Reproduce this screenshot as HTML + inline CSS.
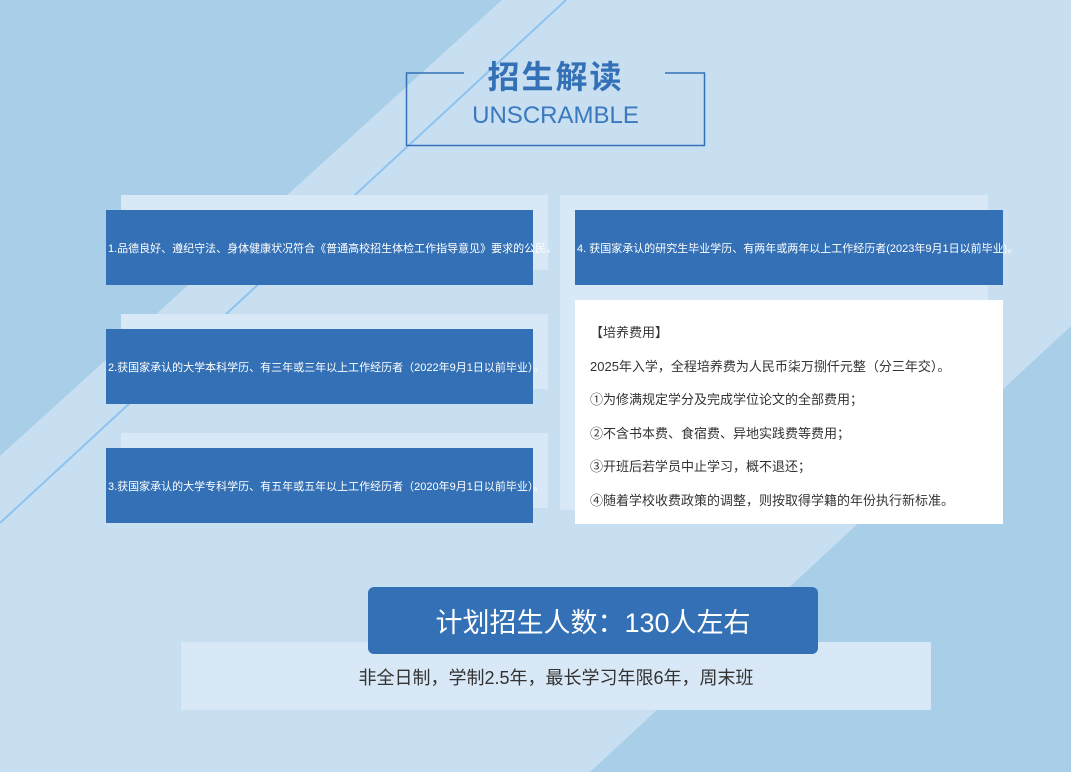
<!DOCTYPE html>
<html><head><meta charset="utf-8"><style>
body{margin:0;width:1071px;height:772px;overflow:hidden;position:relative;background:#c8dff2;font-family:"Liberation Sans","Noto Sans CJK SC",sans-serif}
.a{position:absolute}
.lt{background:#d8e8f6}
.bl{background:#3370b5;color:#fff;font-size:11px;display:flex;align-items:center;padding-left:2px;box-sizing:border-box;white-space:nowrap}
</style></head><body>
<svg class="a" style="left:0;top:0" width="1071" height="772">
<polygon points="0,0 502,0 0,456" fill="#a9cfe8"/>
<polygon points="1071,326 1071,772 590,772" fill="#a9cfe8"/>
<line x1="566" y1="0" x2="0" y2="523" stroke="#8ec3f0" stroke-width="2"/>
<polyline points="464,73 406.5,73 406.5,145.5 704.5,145.5 704.5,73 665,73" fill="none" stroke="#3370b5" stroke-width="1.5"/>
</svg>
<div class="a" style="left:406px;top:52px;width:299px;text-align:center;font-size:32px;font-weight:bold;color:#3370b5;letter-spacing:2px">招生解读</div>
<div class="a" style="left:406px;top:102px;width:299px;text-align:center;font-size:24px;color:#3a78bf">UNSCRAMBLE</div>

<div class="a lt" style="left:121px;top:195px;width:427px;height:75px"></div>
<div class="a bl" style="left:106px;top:210px;width:427px;height:75px">1.品德良好、遵纪守法、身体健康状况符合《普通高校招生体检工作指导意见》要求的公民。</div>
<div class="a lt" style="left:121px;top:314px;width:427px;height:75px"></div>
<div class="a bl" style="left:106px;top:329px;width:427px;height:75px">2.获国家承认的大学本科学历、有三年或三年以上工作经历者（2022年9月1日以前毕业）。</div>
<div class="a lt" style="left:121px;top:433px;width:427px;height:75px"></div>
<div class="a bl" style="left:106px;top:448px;width:427px;height:75px">3.获国家承认的大学专科学历、有五年或五年以上工作经历者（2020年9月1日以前毕业）。</div>

<div class="a lt" style="left:560px;top:195px;width:428px;height:315px"></div>
<div class="a bl" style="left:575px;top:210px;width:428px;height:75px">4. 获国家承认的研究生毕业学历、有两年或两年以上工作经历者(2023年9月1日以前毕业)。</div>
<div class="a" style="left:575px;top:300px;width:428px;height:224px;background:#fff;color:#333;font-size:13px;line-height:33.5px;padding:16px 0 0 15px;box-sizing:border-box">
<div>【培养费用】</div><div>2025年入学，全程培养费为人民币柒万捌仟元整（分三年交）。</div><div>①为修满规定学分及完成学位论文的全部费用；</div><div>②不含书本费、食宿费、异地实践费等费用；</div><div>③开班后若学员中止学习，概不退还；</div><div>④随着学校收费政策的调整，则按取得学籍的年份执行新标准。</div></div>

<div class="a lt" style="left:181px;top:642px;width:750px;height:68px"></div>
<div class="a" style="left:368px;top:587px;width:450px;height:67px;background:#3370b5;border-radius:6px;color:#fff;font-size:27px;display:flex;align-items:center;justify-content:center">计划招生人数：130人左右</div>
<div class="a" style="left:181px;top:664px;width:750px;text-align:center;font-size:18px;color:#333">非全日制，学制2.5年，最长学习年限6年，周末班</div>
</body></html>
